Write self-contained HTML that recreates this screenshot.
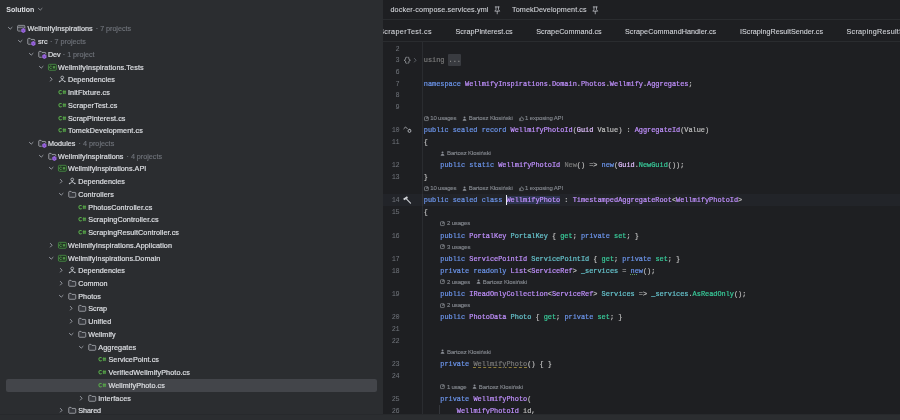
<!DOCTYPE html>
<html><head><meta charset="utf-8"><title>Rider</title>
<style>
*{margin:0;padding:0;box-sizing:border-box}
html,body{width:900px;height:420px;overflow:hidden;background:#2b2d30}
body{position:relative;font-family:"Liberation Sans",sans-serif;color:#dfe1e5}
.abs{position:absolute}
#bgL{position:absolute;left:0;top:0;width:383px;height:414px;background:#2b2d30}
#bgE{position:absolute;left:383px;top:0;width:517px;height:414px;background:#1e1f22}
#bot{position:absolute;left:0;top:414px;width:900px;height:6px;background:#2b2d30;border-top:1px solid #27292c}
#wrap{position:absolute;left:0;top:0;width:900.00px;height:414.00px;overflow:hidden;transform:scale(1.0);transform-origin:0 0;will-change:transform}
.t{position:absolute;white-space:pre;font-family:"Liberation Sans",sans-serif;font-size:7.2px;line-height:12px;height:12px;color:#dfe1e5;-webkit-text-stroke:.16px #dfe1e5}
.g{color:#6f737a;-webkit-text-stroke:.15px #6f737a}
.i{position:absolute;width:8.48px;height:8.48px;line-height:0}
.i svg{display:block}
.c{position:absolute;white-space:pre;font-family:"Liberation Mono",monospace;font-size:6.9px;line-height:12px;height:12px;color:#bdbdbd;-webkit-text-stroke:.2px currentColor}
.ln{position:absolute;white-space:pre;font-family:"Liberation Mono",monospace;font-size:6.9px;letter-spacing:-.35px;line-height:12px;height:12px;color:#70747b;text-align:right;width:21.20px}
.h{position:absolute;white-space:pre;font-family:"Liberation Sans",sans-serif;font-size:6.0px;line-height:12px;height:12px;color:#868a91;-webkit-text-stroke:.12px #868a91}
.k{color:#6c95eb}.p{color:#c191ff}.s{color:#e1bfff}.m{color:#39cc9b}.f{color:#66c3cc}.u{color:#787878}.v{color:#bdbdbd}
.tab{position:absolute;white-space:pre;font-family:"Liberation Sans",sans-serif;font-size:7.2px;line-height:12px;height:12px;color:#d2d4d9;-webkit-text-stroke:.1px #d2d4d9}
.hl{background:#2e3550}
.wavy{text-decoration:underline dashed #8f7e3c;text-decoration-thickness:.800px;text-underline-offset:1.100px}
.dot{text-decoration:underline dotted #5f9a62;text-decoration-thickness:0.80px;text-underline-offset:1.00px}
</style></head><body>
<div id="bgL"></div><div id="bgE"></div><div id="bot"></div>
<div id="wrap">
<div class="t" style="left:6.30px;top:4px;font-weight:bold;font-size:7.00px;-webkit-text-stroke:0">Solution</div>
<div class="i" style="left:35.76px;top:5.36px"><svg width="8.48" height="8.48" viewBox="0 0 16 16" overflow="visible"><path d="M4.600 6.400l3.400 3.200 3.400-3.200" stroke="#8f939a" stroke-width="1.700" fill="none" stroke-linecap="round" stroke-linejoin="round"/></svg></div>
<div class="abs" style="left:6.20px;top:379.04px;width:370.40px;height:12.60px;background:#43454a;border-radius:2.10px"></div>
<div class="i" style="left:6.36px;top:24.26px"><svg width="8.48" height="8.48" viewBox="0 0 16 16" overflow="visible"><path d="M4.600 6.400l3.400 3.200 3.400-3.200" stroke="#a0a4ab" stroke-width="1.700" fill="none" stroke-linecap="round" stroke-linejoin="round"/></svg></div>
<div class="i" style="left:17.40px;top:24.26px"><svg width="8.48" height="8.48" viewBox="0 0 16 16" overflow="visible"><rect x="1.100" y="2.600" width="13.800" height="10.800" rx="1.800" fill="#393b40" stroke="#c4c7cd" stroke-width="1.150"/><path d="M1.300 6.100h13.400" stroke="#c4c7cd" stroke-width="1.100"/><path d="M12 6.500l5 2.900v5.600l-5 2.800-5-2.800V9.400z" fill="#2b2d30"/><path d="M12 7.600l4 2.300v4.600l-4 2.300-4-2.300V9.900z" fill="#9e6be2"/><path d="M12 12.300v3.600M8.800 10.500l3.200 1.800 3.200-1.800" stroke="#6a3fae" stroke-width="1" fill="none"/></svg></div>
<div class="t" style="left:27.50px;top:23px;letter-spacing:0.076px">WellmifyInspirations</div>
<div class="t g" style="left:95.80px;top:23px;letter-spacing:-0.030px">· 7 projects</div>
<div class="i" style="left:16.43px;top:37.26px"><svg width="8.48" height="8.48" viewBox="0 0 16 16" overflow="visible"><path d="M4.600 6.400l3.400 3.200 3.400-3.200" stroke="#a0a4ab" stroke-width="1.700" fill="none" stroke-linecap="round" stroke-linejoin="round"/></svg></div>
<div class="i" style="left:27.47px;top:37.26px"><svg width="8.48" height="8.48" viewBox="0 0 16 16" overflow="visible"><path d="M1.400 4c0-.8.600-1.400 1.400-1.400h3l1.900 2h5.500c.8 0 1.400.6 1.400 1.400v6.300c0 .8-.6 1.400-1.400 1.400H2.800c-.8 0-1.400-.6-1.400-1.400z" fill="#35373c" stroke="#bfc2c8" stroke-width="1.300"/><path d="M12 6.500l5 2.900v5.600l-5 2.800-5-2.800V9.400z" fill="#2b2d30"/><path d="M12 7.600l4 2.300v4.600l-4 2.300-4-2.300V9.900z" fill="#9e6be2"/><path d="M12 12.300v3.600M8.800 10.500l3.200 1.800 3.200-1.800" stroke="#6a3fae" stroke-width="1" fill="none"/></svg></div>
<div class="t" style="left:38.00px;top:36px;letter-spacing:-0.031px">src</div>
<div class="t g" style="left:50.00px;top:36px;letter-spacing:0.020px">· 7 projects</div>
<div class="i" style="left:26.50px;top:50.26px"><svg width="8.48" height="8.48" viewBox="0 0 16 16" overflow="visible"><path d="M4.600 6.400l3.400 3.200 3.400-3.200" stroke="#a0a4ab" stroke-width="1.700" fill="none" stroke-linecap="round" stroke-linejoin="round"/></svg></div>
<div class="i" style="left:37.54px;top:50.26px"><svg width="8.48" height="8.48" viewBox="0 0 16 16" overflow="visible"><path d="M1.400 4c0-.8.600-1.400 1.400-1.400h3l1.900 2h5.500c.8 0 1.400.6 1.400 1.400v6.300c0 .8-.6 1.400-1.400 1.400H2.800c-.8 0-1.400-.6-1.400-1.400z" fill="#35373c" stroke="#bfc2c8" stroke-width="1.300"/><path d="M12 6.500l5 2.900v5.600l-5 2.800-5-2.800V9.400z" fill="#2b2d30"/><path d="M12 7.600l4 2.300v4.600l-4 2.300-4-2.300V9.900z" fill="#9e6be2"/><path d="M12 12.300v3.600M8.800 10.500l3.200 1.800 3.200-1.800" stroke="#6a3fae" stroke-width="1" fill="none"/></svg></div>
<div class="t" style="left:48.00px;top:49px;letter-spacing:-0.099px">Dev</div>
<div class="t g" style="left:62.80px;top:49px;letter-spacing:-0.024px">· 1 project</div>
<div class="i" style="left:36.57px;top:63.26px"><svg width="8.48" height="8.48" viewBox="0 0 16 16" overflow="visible"><path d="M4.600 6.400l3.400 3.200 3.400-3.200" stroke="#a0a4ab" stroke-width="1.700" fill="none" stroke-linecap="round" stroke-linejoin="round"/></svg></div>
<div class="i" style="left:47.61px;top:63.26px"><svg width="8.48" height="8.48" viewBox="0 0 16 16" overflow="visible"><rect x=".800" y="2.500" width="15" height="11.200" rx="2" fill="#213324" stroke="#4f9e49" stroke-width="1.400"/><path d="M6.900 6.300a2.400 2.400 0 1 0 0 3.600" stroke="#66bb58" stroke-width="1.250" fill="none"/><path d="M10.200 5.800v4.600M12.400 5.800v4.600M9 7.200h4.600M9 9h4.600" stroke="#66bb58" stroke-width=".95"/></svg></div>
<div class="t" style="left:58.00px;top:62px;letter-spacing:0.123px">WellmifyInspirations.Tests</div>
<div class="i" style="left:46.64px;top:75.26px"><svg width="8.48" height="8.48" viewBox="0 0 16 16" overflow="visible"><path d="M6.400 4.600l3.200 3.400-3.200 3.400" stroke="#a0a4ab" stroke-width="1.700" fill="none" stroke-linecap="round" stroke-linejoin="round"/></svg></div>
<div class="i" style="left:57.68px;top:75.26px"><svg width="8.48" height="8.48" viewBox="0 0 16 16" overflow="visible"><circle cx="8" cy="4.700" r="2.600" fill="none" stroke="#c8cbd0" stroke-width="1.500"/><path d="M8 7.300v1.700M8 9l-4.600 3.200M8 9l4.600 3.200" stroke="#c8cbd0" stroke-width="1.500" fill="none" stroke-linecap="round"/><circle cx="3" cy="12.400" r="1.500" fill="#c8cbd0"/><circle cx="13" cy="12.400" r="1.500" fill="#c8cbd0"/></svg></div>
<div class="t" style="left:68.00px;top:74px;letter-spacing:0.086px">Dependencies</div>
<div class="i" style="left:57.68px;top:88.26px"><svg width="8.48" height="8.48" viewBox="0 0 16 16" overflow="visible"><path d="M6.900 5.700a3 3.300 0 1 0 0 4.400" stroke="#58a94a" stroke-width="2" fill="none"/><path d="M10.700 4.300v7.200M13.400 4.300v7.200M8.800 6.600h6.500M8.800 9.300h6.500" stroke="#58a94a" stroke-width="1.500"/></svg></div>
<div class="t" style="left:68.00px;top:87px;letter-spacing:0.089px">InitFixture.cs</div>
<div class="i" style="left:57.68px;top:101.26px"><svg width="8.48" height="8.48" viewBox="0 0 16 16" overflow="visible"><path d="M6.900 5.700a3 3.300 0 1 0 0 4.400" stroke="#58a94a" stroke-width="2" fill="none"/><path d="M10.700 4.300v7.200M13.400 4.300v7.200M8.800 6.600h6.500M8.800 9.300h6.500" stroke="#58a94a" stroke-width="1.500"/></svg></div>
<div class="t" style="left:68.00px;top:100px;letter-spacing:0.140px">ScraperTest.cs</div>
<div class="i" style="left:57.68px;top:114.26px"><svg width="8.48" height="8.48" viewBox="0 0 16 16" overflow="visible"><path d="M6.900 5.700a3 3.300 0 1 0 0 4.400" stroke="#58a94a" stroke-width="2" fill="none"/><path d="M10.700 4.300v7.200M13.400 4.300v7.200M8.800 6.600h6.500M8.800 9.300h6.500" stroke="#58a94a" stroke-width="1.500"/></svg></div>
<div class="t" style="left:68.00px;top:113px;letter-spacing:0.069px">ScrapPinterest.cs</div>
<div class="i" style="left:57.68px;top:126.26px"><svg width="8.48" height="8.48" viewBox="0 0 16 16" overflow="visible"><path d="M6.900 5.700a3 3.300 0 1 0 0 4.400" stroke="#58a94a" stroke-width="2" fill="none"/><path d="M10.700 4.300v7.200M13.400 4.300v7.200M8.800 6.600h6.500M8.800 9.300h6.500" stroke="#58a94a" stroke-width="1.500"/></svg></div>
<div class="t" style="left:68.00px;top:125px;letter-spacing:0.121px">TomekDevelopment.cs</div>
<div class="i" style="left:26.50px;top:139.26px"><svg width="8.48" height="8.48" viewBox="0 0 16 16" overflow="visible"><path d="M4.600 6.400l3.400 3.200 3.400-3.200" stroke="#a0a4ab" stroke-width="1.700" fill="none" stroke-linecap="round" stroke-linejoin="round"/></svg></div>
<div class="i" style="left:37.54px;top:139.26px"><svg width="8.48" height="8.48" viewBox="0 0 16 16" overflow="visible"><path d="M1.400 4c0-.8.600-1.400 1.400-1.400h3l1.900 2h5.500c.8 0 1.400.6 1.400 1.400v6.300c0 .8-.6 1.400-1.400 1.400H2.800c-.8 0-1.400-.6-1.400-1.400z" fill="#35373c" stroke="#bfc2c8" stroke-width="1.300"/><path d="M12 6.500l5 2.900v5.600l-5 2.800-5-2.800V9.400z" fill="#2b2d30"/><path d="M12 7.600l4 2.300v4.600l-4 2.300-4-2.300V9.900z" fill="#9e6be2"/><path d="M12 12.300v3.600M8.800 10.500l3.200 1.800 3.200-1.800" stroke="#6a3fae" stroke-width="1" fill="none"/></svg></div>
<div class="t" style="left:48.00px;top:138px;letter-spacing:0.047px">Modules</div>
<div class="t g" style="left:78.50px;top:138px;letter-spacing:0.016px">· 4 projects</div>
<div class="i" style="left:36.57px;top:152.26px"><svg width="8.48" height="8.48" viewBox="0 0 16 16" overflow="visible"><path d="M4.600 6.400l3.400 3.200 3.400-3.200" stroke="#a0a4ab" stroke-width="1.700" fill="none" stroke-linecap="round" stroke-linejoin="round"/></svg></div>
<div class="i" style="left:47.61px;top:152.26px"><svg width="8.48" height="8.48" viewBox="0 0 16 16" overflow="visible"><path d="M1.400 4c0-.8.600-1.400 1.400-1.400h3l1.900 2h5.500c.8 0 1.400.6 1.400 1.400v6.300c0 .8-.6 1.400-1.400 1.400H2.800c-.8 0-1.400-.6-1.400-1.400z" fill="#35373c" stroke="#bfc2c8" stroke-width="1.300"/><path d="M12 6.500l5 2.900v5.600l-5 2.800-5-2.800V9.400z" fill="#2b2d30"/><path d="M12 7.600l4 2.300v4.600l-4 2.300-4-2.300V9.900z" fill="#9e6be2"/><path d="M12 12.300v3.600M8.800 10.500l3.200 1.800 3.200-1.800" stroke="#6a3fae" stroke-width="1" fill="none"/></svg></div>
<div class="t" style="left:58.00px;top:151px;letter-spacing:0.086px">WellmifyInspirations</div>
<div class="t g" style="left:126.50px;top:151px;letter-spacing:-0.005px">· 4 projects</div>
<div class="i" style="left:46.64px;top:164.26px"><svg width="8.48" height="8.48" viewBox="0 0 16 16" overflow="visible"><path d="M4.600 6.400l3.400 3.200 3.400-3.200" stroke="#a0a4ab" stroke-width="1.700" fill="none" stroke-linecap="round" stroke-linejoin="round"/></svg></div>
<div class="i" style="left:57.68px;top:164.26px"><svg width="8.48" height="8.48" viewBox="0 0 16 16" overflow="visible"><rect x=".800" y="2.500" width="15" height="11.200" rx="2" fill="#213324" stroke="#4f9e49" stroke-width="1.400"/><path d="M6.900 6.300a2.400 2.400 0 1 0 0 3.600" stroke="#66bb58" stroke-width="1.250" fill="none"/><path d="M10.200 5.800v4.600M12.400 5.800v4.600M9 7.200h4.600M9 9h4.600" stroke="#66bb58" stroke-width=".95"/></svg></div>
<div class="t" style="left:68.00px;top:163px;letter-spacing:0.037px">WellmifyInspirations.API</div>
<div class="i" style="left:56.71px;top:177.26px"><svg width="8.48" height="8.48" viewBox="0 0 16 16" overflow="visible"><path d="M6.400 4.600l3.200 3.400-3.200 3.400" stroke="#a0a4ab" stroke-width="1.700" fill="none" stroke-linecap="round" stroke-linejoin="round"/></svg></div>
<div class="i" style="left:67.75px;top:177.26px"><svg width="8.48" height="8.48" viewBox="0 0 16 16" overflow="visible"><circle cx="8" cy="4.700" r="2.600" fill="none" stroke="#c8cbd0" stroke-width="1.500"/><path d="M8 7.300v1.700M8 9l-4.600 3.200M8 9l4.600 3.200" stroke="#c8cbd0" stroke-width="1.500" fill="none" stroke-linecap="round"/><circle cx="3" cy="12.400" r="1.500" fill="#c8cbd0"/><circle cx="13" cy="12.400" r="1.500" fill="#c8cbd0"/></svg></div>
<div class="t" style="left:78.25px;top:176px;letter-spacing:0.065px">Dependencies</div>
<div class="i" style="left:56.71px;top:190.26px"><svg width="8.48" height="8.48" viewBox="0 0 16 16" overflow="visible"><path d="M4.600 6.400l3.400 3.200 3.400-3.200" stroke="#a0a4ab" stroke-width="1.700" fill="none" stroke-linecap="round" stroke-linejoin="round"/></svg></div>
<div class="i" style="left:67.75px;top:190.26px"><svg width="8.48" height="8.48" viewBox="0 0 16 16" overflow="visible"><path d="M1.400 4c0-.8.600-1.400 1.400-1.400h3l1.900 2h5.500c.8 0 1.400.6 1.400 1.400v6.300c0 .8-.6 1.400-1.400 1.400H2.800c-.8 0-1.400-.6-1.400-1.400z" fill="#35373c" stroke="#bfc2c8" stroke-width="1.300"/></svg></div>
<div class="t" style="left:78.25px;top:189px;letter-spacing:0.089px">Controllers</div>
<div class="i" style="left:77.82px;top:203.26px"><svg width="8.48" height="8.48" viewBox="0 0 16 16" overflow="visible"><path d="M6.900 5.700a3 3.300 0 1 0 0 4.400" stroke="#58a94a" stroke-width="2" fill="none"/><path d="M10.700 4.300v7.200M13.400 4.300v7.200M8.800 6.600h6.500M8.800 9.300h6.500" stroke="#58a94a" stroke-width="1.500"/></svg></div>
<div class="t" style="left:88.25px;top:202px;letter-spacing:0.101px">PhotosController.cs</div>
<div class="i" style="left:77.82px;top:215.26px"><svg width="8.48" height="8.48" viewBox="0 0 16 16" overflow="visible"><path d="M6.900 5.700a3 3.300 0 1 0 0 4.400" stroke="#58a94a" stroke-width="2" fill="none"/><path d="M10.700 4.300v7.200M13.400 4.300v7.200M8.800 6.600h6.500M8.800 9.300h6.500" stroke="#58a94a" stroke-width="1.500"/></svg></div>
<div class="t" style="left:88.25px;top:214px;letter-spacing:0.104px">ScrapingController.cs</div>
<div class="i" style="left:77.82px;top:228.26px"><svg width="8.48" height="8.48" viewBox="0 0 16 16" overflow="visible"><path d="M6.900 5.700a3 3.300 0 1 0 0 4.400" stroke="#58a94a" stroke-width="2" fill="none"/><path d="M10.700 4.300v7.200M13.400 4.300v7.200M8.800 6.600h6.500M8.800 9.300h6.500" stroke="#58a94a" stroke-width="1.500"/></svg></div>
<div class="t" style="left:88.25px;top:227px;letter-spacing:0.076px">ScrapingResultController.cs</div>
<div class="i" style="left:46.64px;top:241.26px"><svg width="8.48" height="8.48" viewBox="0 0 16 16" overflow="visible"><path d="M6.400 4.600l3.200 3.400-3.200 3.400" stroke="#a0a4ab" stroke-width="1.700" fill="none" stroke-linecap="round" stroke-linejoin="round"/></svg></div>
<div class="i" style="left:57.68px;top:241.26px"><svg width="8.48" height="8.48" viewBox="0 0 16 16" overflow="visible"><rect x=".800" y="2.500" width="15" height="11.200" rx="2" fill="#213324" stroke="#4f9e49" stroke-width="1.400"/><path d="M6.900 6.300a2.400 2.400 0 1 0 0 3.600" stroke="#66bb58" stroke-width="1.250" fill="none"/><path d="M10.200 5.800v4.600M12.400 5.800v4.600M9 7.200h4.600M9 9h4.600" stroke="#66bb58" stroke-width=".95"/></svg></div>
<div class="t" style="left:68.00px;top:240px;letter-spacing:0.096px">WellmifyInspirations.Application</div>
<div class="i" style="left:46.64px;top:254.26px"><svg width="8.48" height="8.48" viewBox="0 0 16 16" overflow="visible"><path d="M4.600 6.400l3.400 3.200 3.400-3.200" stroke="#a0a4ab" stroke-width="1.700" fill="none" stroke-linecap="round" stroke-linejoin="round"/></svg></div>
<div class="i" style="left:57.68px;top:254.26px"><svg width="8.48" height="8.48" viewBox="0 0 16 16" overflow="visible"><rect x=".800" y="2.500" width="15" height="11.200" rx="2" fill="#213324" stroke="#4f9e49" stroke-width="1.400"/><path d="M6.900 6.300a2.400 2.400 0 1 0 0 3.600" stroke="#66bb58" stroke-width="1.250" fill="none"/><path d="M10.200 5.800v4.600M12.400 5.800v4.600M9 7.200h4.600M9 9h4.600" stroke="#66bb58" stroke-width=".95"/></svg></div>
<div class="t" style="left:68.00px;top:253px;letter-spacing:0.063px">WellmifyInspirations.Domain</div>
<div class="i" style="left:56.71px;top:266.26px"><svg width="8.48" height="8.48" viewBox="0 0 16 16" overflow="visible"><path d="M6.400 4.600l3.200 3.400-3.200 3.400" stroke="#a0a4ab" stroke-width="1.700" fill="none" stroke-linecap="round" stroke-linejoin="round"/></svg></div>
<div class="i" style="left:67.75px;top:266.26px"><svg width="8.48" height="8.48" viewBox="0 0 16 16" overflow="visible"><circle cx="8" cy="4.700" r="2.600" fill="none" stroke="#c8cbd0" stroke-width="1.500"/><path d="M8 7.300v1.700M8 9l-4.600 3.200M8 9l4.600 3.200" stroke="#c8cbd0" stroke-width="1.500" fill="none" stroke-linecap="round"/><circle cx="3" cy="12.400" r="1.500" fill="#c8cbd0"/><circle cx="13" cy="12.400" r="1.500" fill="#c8cbd0"/></svg></div>
<div class="t" style="left:78.25px;top:265px;letter-spacing:0.065px">Dependencies</div>
<div class="i" style="left:56.71px;top:279.26px"><svg width="8.48" height="8.48" viewBox="0 0 16 16" overflow="visible"><path d="M6.400 4.600l3.200 3.400-3.200 3.400" stroke="#a0a4ab" stroke-width="1.700" fill="none" stroke-linecap="round" stroke-linejoin="round"/></svg></div>
<div class="i" style="left:67.75px;top:279.26px"><svg width="8.48" height="8.48" viewBox="0 0 16 16" overflow="visible"><path d="M1.400 4c0-.8.600-1.400 1.400-1.400h3l1.900 2h5.500c.8 0 1.400.6 1.400 1.400v6.300c0 .8-.6 1.400-1.400 1.400H2.800c-.8 0-1.400-.6-1.400-1.400z" fill="#35373c" stroke="#bfc2c8" stroke-width="1.300"/></svg></div>
<div class="t" style="left:78.25px;top:278px;letter-spacing:0.013px">Common</div>
<div class="i" style="left:56.71px;top:292.26px"><svg width="8.48" height="8.48" viewBox="0 0 16 16" overflow="visible"><path d="M4.600 6.400l3.400 3.200 3.400-3.200" stroke="#a0a4ab" stroke-width="1.700" fill="none" stroke-linecap="round" stroke-linejoin="round"/></svg></div>
<div class="i" style="left:67.75px;top:292.26px"><svg width="8.48" height="8.48" viewBox="0 0 16 16" overflow="visible"><path d="M1.400 4c0-.8.600-1.400 1.400-1.400h3l1.900 2h5.500c.8 0 1.400.6 1.400 1.400v6.300c0 .8-.6 1.400-1.400 1.400H2.800c-.8 0-1.400-.6-1.400-1.400z" fill="#35373c" stroke="#bfc2c8" stroke-width="1.300"/></svg></div>
<div class="t" style="left:78.25px;top:291px;letter-spacing:0.060px">Photos</div>
<div class="i" style="left:66.78px;top:304.26px"><svg width="8.48" height="8.48" viewBox="0 0 16 16" overflow="visible"><path d="M6.400 4.600l3.200 3.400-3.200 3.400" stroke="#a0a4ab" stroke-width="1.700" fill="none" stroke-linecap="round" stroke-linejoin="round"/></svg></div>
<div class="i" style="left:77.82px;top:304.26px"><svg width="8.48" height="8.48" viewBox="0 0 16 16" overflow="visible"><path d="M1.400 4c0-.8.600-1.400 1.400-1.400h3l1.900 2h5.500c.8 0 1.400.6 1.400 1.400v6.300c0 .8-.6 1.400-1.400 1.400H2.800c-.8 0-1.400-.6-1.400-1.400z" fill="#35373c" stroke="#bfc2c8" stroke-width="1.300"/></svg></div>
<div class="t" style="left:88.25px;top:303px;letter-spacing:-0.006px">Scrap</div>
<div class="i" style="left:66.78px;top:317.26px"><svg width="8.48" height="8.48" viewBox="0 0 16 16" overflow="visible"><path d="M6.400 4.600l3.200 3.400-3.200 3.400" stroke="#a0a4ab" stroke-width="1.700" fill="none" stroke-linecap="round" stroke-linejoin="round"/></svg></div>
<div class="i" style="left:77.82px;top:317.26px"><svg width="8.48" height="8.48" viewBox="0 0 16 16" overflow="visible"><path d="M1.400 4c0-.8.600-1.400 1.400-1.400h3l1.900 2h5.500c.8 0 1.400.6 1.400 1.400v6.300c0 .8-.6 1.400-1.400 1.400H2.800c-.8 0-1.400-.6-1.400-1.400z" fill="#35373c" stroke="#bfc2c8" stroke-width="1.300"/></svg></div>
<div class="t" style="left:88.25px;top:316px;letter-spacing:0.089px">Unified</div>
<div class="i" style="left:66.78px;top:330.26px"><svg width="8.48" height="8.48" viewBox="0 0 16 16" overflow="visible"><path d="M4.600 6.400l3.400 3.200 3.400-3.200" stroke="#a0a4ab" stroke-width="1.700" fill="none" stroke-linecap="round" stroke-linejoin="round"/></svg></div>
<div class="i" style="left:77.82px;top:330.26px"><svg width="8.48" height="8.48" viewBox="0 0 16 16" overflow="visible"><path d="M1.400 4c0-.8.600-1.400 1.400-1.400h3l1.900 2h5.500c.8 0 1.400.6 1.400 1.400v6.300c0 .8-.6 1.400-1.400 1.400H2.800c-.8 0-1.400-.6-1.400-1.400z" fill="#35373c" stroke="#bfc2c8" stroke-width="1.300"/></svg></div>
<div class="t" style="left:88.25px;top:329px;letter-spacing:0.059px">Wellmify</div>
<div class="i" style="left:76.85px;top:343.26px"><svg width="8.48" height="8.48" viewBox="0 0 16 16" overflow="visible"><path d="M4.600 6.400l3.400 3.200 3.400-3.200" stroke="#a0a4ab" stroke-width="1.700" fill="none" stroke-linecap="round" stroke-linejoin="round"/></svg></div>
<div class="i" style="left:87.89px;top:343.26px"><svg width="8.48" height="8.48" viewBox="0 0 16 16" overflow="visible"><path d="M1.400 4c0-.8.600-1.400 1.400-1.400h3l1.900 2h5.500c.8 0 1.400.6 1.400 1.400v6.300c0 .8-.6 1.400-1.400 1.400H2.800c-.8 0-1.400-.6-1.400-1.400z" fill="#35373c" stroke="#bfc2c8" stroke-width="1.300"/></svg></div>
<div class="t" style="left:98.25px;top:342px;letter-spacing:0.123px">Aggregates</div>
<div class="i" style="left:97.96px;top:355.26px"><svg width="8.48" height="8.48" viewBox="0 0 16 16" overflow="visible"><path d="M6.900 5.700a3 3.300 0 1 0 0 4.400" stroke="#58a94a" stroke-width="2" fill="none"/><path d="M10.700 4.300v7.200M13.400 4.300v7.200M8.800 6.600h6.500M8.800 9.300h6.500" stroke="#58a94a" stroke-width="1.500"/></svg></div>
<div class="t" style="left:108.50px;top:354px;letter-spacing:0.064px">ServicePoint.cs</div>
<div class="i" style="left:97.96px;top:368.26px"><svg width="8.48" height="8.48" viewBox="0 0 16 16" overflow="visible"><path d="M6.900 5.700a3 3.300 0 1 0 0 4.400" stroke="#58a94a" stroke-width="2" fill="none"/><path d="M10.700 4.300v7.200M13.400 4.300v7.200M8.800 6.600h6.500M8.800 9.300h6.500" stroke="#58a94a" stroke-width="1.500"/></svg></div>
<div class="t" style="left:108.50px;top:367px;letter-spacing:0.105px">VerifiedWellmifyPhoto.cs</div>
<div class="i" style="left:97.96px;top:381.26px"><svg width="8.48" height="8.48" viewBox="0 0 16 16" overflow="visible"><path d="M6.900 5.700a3 3.300 0 1 0 0 4.400" stroke="#58a94a" stroke-width="2" fill="none"/><path d="M10.700 4.300v7.200M13.400 4.300v7.200M8.800 6.600h6.500M8.800 9.300h6.500" stroke="#58a94a" stroke-width="1.500"/></svg></div>
<div class="t" style="left:108.50px;top:380px;letter-spacing:0.094px">WellmifyPhoto.cs</div>
<div class="i" style="left:76.85px;top:394.26px"><svg width="8.48" height="8.48" viewBox="0 0 16 16" overflow="visible"><path d="M6.400 4.600l3.200 3.400-3.200 3.400" stroke="#a0a4ab" stroke-width="1.700" fill="none" stroke-linecap="round" stroke-linejoin="round"/></svg></div>
<div class="i" style="left:87.89px;top:394.26px"><svg width="8.48" height="8.48" viewBox="0 0 16 16" overflow="visible"><path d="M1.400 4c0-.8.600-1.400 1.400-1.400h3l1.900 2h5.500c.8 0 1.400.6 1.400 1.400v6.300c0 .8-.6 1.400-1.400 1.400H2.800c-.8 0-1.400-.6-1.400-1.400z" fill="#35373c" stroke="#bfc2c8" stroke-width="1.300"/></svg></div>
<div class="t" style="left:98.25px;top:393px;letter-spacing:0.119px">Interfaces</div>
<div class="i" style="left:56.71px;top:406.26px"><svg width="8.48" height="8.48" viewBox="0 0 16 16" overflow="visible"><path d="M6.400 4.600l3.200 3.400-3.200 3.400" stroke="#a0a4ab" stroke-width="1.700" fill="none" stroke-linecap="round" stroke-linejoin="round"/></svg></div>
<div class="i" style="left:67.75px;top:406.26px"><svg width="8.48" height="8.48" viewBox="0 0 16 16" overflow="visible"><path d="M1.400 4c0-.8.600-1.400 1.400-1.400h3l1.900 2h5.500c.8 0 1.400.6 1.400 1.400v6.300c0 .8-.6 1.400-1.400 1.400H2.800c-.8 0-1.400-.6-1.400-1.400z" fill="#35373c" stroke="#bfc2c8" stroke-width="1.300"/></svg></div>
<div class="t" style="left:78.25px;top:405px;letter-spacing:-0.073px">Shared</div>
<div class="abs" style="left:383.00px;top:19.20px;width:517.00px;height:1.00px;background:#2a2c2f"></div>
<div class="abs" style="left:383.00px;top:41.20px;width:517.00px;height:1.00px;background:#2a2c2f"></div>
<div class="abs" style="left:422.00px;top:42.00px;width:1.00px;height:372.00px;background:#2a2c30"></div>
<div class="abs" style="left:383.00px;top:0;width:517.00px;height:41.00px;overflow:hidden">
<div class="tab" style="left:7.50px;top:4px;letter-spacing:0.123px">docker-compose.services.yml</div>
<div class="tab" style="left:129.00px;top:4px;letter-spacing:0.108px">TomekDevelopment.cs</div>
<div class="tab" style="left:-3.80px;top:26px;letter-spacing:0.375px">ScraperTest.cs</div>
<div class="tab" style="left:72.50px;top:26px;letter-spacing:0.054px">ScrapPinterest.cs</div>
<div class="tab" style="left:153.25px;top:26px;letter-spacing:0.023px">ScrapeCommand.cs</div>
<div class="tab" style="left:242.00px;top:26px;letter-spacing:0.059px">ScrapeCommandHandler.cs</div>
<div class="tab" style="left:357.00px;top:26px;letter-spacing:0.012px">IScrapingResultSender.cs</div>
<div class="tab" style="left:463.50px;top:26px;letter-spacing:0.272px">ScrapingResultSenderTests.cs</div>
<div class="i" style="left:109.50px;top:5.50px"><svg width="8.48" height="8.48" viewBox="0 0 16 16" overflow="visible"><path d="M4.300 1.800h7.400M5.600 1.800v5l-2.200 3h9.200l-2.200-3v-5M8 9.800v5" stroke="#b9bcc2" stroke-width="1.500" fill="none" stroke-linejoin="round" stroke-linecap="round"/></svg></div>
<div class="i" style="left:208.00px;top:5.50px"><svg width="8.48" height="8.48" viewBox="0 0 16 16" overflow="visible"><path d="M4.300 1.800h7.400M5.600 1.800v5l-2.200 3h9.200l-2.200-3v-5M8 9.800v5" stroke="#b9bcc2" stroke-width="1.500" fill="none" stroke-linejoin="round" stroke-linecap="round"/></svg></div>
</div>
<div class="abs" style="left:383.00px;top:194.12px;width:517.00px;height:11.68px;background:#222429"></div>
<div class="abs" style="left:422.00px;top:194.12px;width:1.00px;height:11.68px;background:#303237"></div>
<div class="ln" style="left:378.20px;top:43px">2</div>
<div class="ln" style="left:378.20px;top:54px">3</div>
<div class="c" style="left:423.75px;top:54px"><span class="u">using</span></div>
<div class="abs" style="left:448.00px;top:53.80px;width:12.80px;height:12.00px;background:#393b40;border-radius:1.00px"></div>
<div class="c" style="left:448.59px;top:54px"><span style="color:#8c8c8c">...</span></div>
<div class="ln" style="left:378.20px;top:66px">6</div>
<div class="ln" style="left:378.20px;top:78px">7</div>
<div class="c" style="left:423.75px;top:78px"><span class="k">namespace</span> <span class="p">WellmifyInspirations</span>.<span class="p">Domain</span>.<span class="p">Photos</span>.<span class="p">Wellmify</span>.<span class="p">Aggregates</span>;</div>
<div class="ln" style="left:378.20px;top:89px">8</div>
<div class="ln" style="left:378.20px;top:101px">9</div>
<div class="i" style="left:424.05px;top:115.70px;width:5.10px;height:5.10px"><svg width="5.09" height="5.09" viewBox="0 0 16 16" overflow="visible"><rect x="1.600" y="2.400" width="12" height="12" rx="1.800" fill="none" stroke="#8a8e95" stroke-width="2.200"/><path d="M6 10l5.500-5.500M7.500 4h4.500v4.500" stroke="#8a8e95" stroke-width="2" fill="none"/></svg></div>
<div class="h" style="left:430.25px;top:112px;letter-spacing:-0.189px">10 usages</div>
<div class="i" style="left:462.20px;top:115.70px;width:5.10px;height:5.10px"><svg width="5.09" height="5.09" viewBox="0 0 16 16" overflow="visible"><circle cx="8" cy="4.600" r="3.100" fill="#8a8e95"/><path d="M2.200 15c0-3.800 2.400-5.600 5.800-5.600s5.800 1.800 5.800 5.600z" fill="#8a8e95"/></svg></div>
<div class="h" style="left:468.75px;top:112px;letter-spacing:-0.099px">Bartosz Kłosiński</div>
<div class="i" style="left:518.60px;top:115.70px;width:5.10px;height:5.10px"><svg width="5.09" height="5.09" viewBox="0 0 16 16" overflow="visible"><path d="M1.500 7.500h3.200v7H1.500zM4.700 7.800l3.300-5.600c1.700 0 2.300 1.200 1.900 2.600l-.5 2h4c1.100 0 1.800.9 1.500 1.900l-1.100 4.300c-.2.900-.9 1.500-1.800 1.500H4.700" fill="none" stroke="#8a8e95" stroke-width="2" stroke-linejoin="round"/></svg></div>
<div class="h" style="left:525.00px;top:112px;letter-spacing:-0.145px">1 exposing API</div>
<div class="ln" style="left:378.20px;top:124px">10</div>
<div class="c" style="left:423.75px;top:124px"><span class="k">public sealed record</span> <span class="p">WellmifyPhotoId</span>(<span class="s">Guid</span> <span class="v">Value</span>) : <span class="p">AggregateId</span>(<span class="v">Value</span>)</div>
<div class="ln" style="left:378.20px;top:136px">11</div>
<div class="c" style="left:423.75px;top:136px">{</div>
<div class="i" style="left:440.40px;top:150.74px;width:5.10px;height:5.10px"><svg width="5.09" height="5.09" viewBox="0 0 16 16" overflow="visible"><circle cx="8" cy="4.600" r="3.100" fill="#8a8e95"/><path d="M2.200 15c0-3.800 2.400-5.600 5.800-5.600s5.800 1.800 5.800 5.600z" fill="#8a8e95"/></svg></div>
<div class="h" style="left:447.00px;top:147px;letter-spacing:-0.114px">Bartosz Kłosiński</div>
<div class="ln" style="left:378.20px;top:159px">12</div>
<div class="c" style="left:423.75px;top:159px">    <span class="k">public static</span> <span class="p">WellmifyPhotoId</span> <span class="u">New</span>() =&gt; <span class="k">new</span>(<span class="s">Guid</span>.<span class="m">NewGuid</span>());</div>
<div class="ln" style="left:378.20px;top:171px">13</div>
<div class="c" style="left:423.75px;top:171px">}</div>
<div class="i" style="left:424.05px;top:185.78px;width:5.10px;height:5.10px"><svg width="5.09" height="5.09" viewBox="0 0 16 16" overflow="visible"><rect x="1.600" y="2.400" width="12" height="12" rx="1.800" fill="none" stroke="#8a8e95" stroke-width="2.200"/><path d="M6 10l5.500-5.500M7.500 4h4.500v4.500" stroke="#8a8e95" stroke-width="2" fill="none"/></svg></div>
<div class="h" style="left:430.25px;top:182px;letter-spacing:-0.189px">10 usages</div>
<div class="i" style="left:462.20px;top:185.78px;width:5.10px;height:5.10px"><svg width="5.09" height="5.09" viewBox="0 0 16 16" overflow="visible"><circle cx="8" cy="4.600" r="3.100" fill="#8a8e95"/><path d="M2.200 15c0-3.800 2.400-5.600 5.800-5.600s5.800 1.800 5.800 5.600z" fill="#8a8e95"/></svg></div>
<div class="h" style="left:468.75px;top:182px;letter-spacing:-0.099px">Bartosz Kłosiński</div>
<div class="i" style="left:518.60px;top:185.78px;width:5.10px;height:5.10px"><svg width="5.09" height="5.09" viewBox="0 0 16 16" overflow="visible"><path d="M1.500 7.500h3.200v7H1.500zM4.700 7.800l3.300-5.600c1.700 0 2.300 1.200 1.900 2.600l-.5 2h4c1.100 0 1.800.9 1.500 1.900l-1.100 4.300c-.2.900-.9 1.500-1.800 1.500H4.700" fill="none" stroke="#8a8e95" stroke-width="2" stroke-linejoin="round"/></svg></div>
<div class="h" style="left:525.00px;top:182px;letter-spacing:-0.145px">1 exposing API</div>
<div class="ln" style="left:378.20px;top:194px">14</div>
<div class="c" style="left:423.75px;top:194px"><span class="k">public sealed class</span> <span class="p hl">WellmifyPhoto</span> : <span class="p">TimestampedAggregateRoot</span>&lt;<span class="p">WellmifyPhotoId</span>&gt;</div>
<div class="ln" style="left:378.20px;top:206px">15</div>
<div class="c" style="left:423.75px;top:206px">{</div>
<div class="i" style="left:440.30px;top:220.82px;width:5.10px;height:5.10px"><svg width="5.09" height="5.09" viewBox="0 0 16 16" overflow="visible"><rect x="1.600" y="2.400" width="12" height="12" rx="1.800" fill="none" stroke="#8a8e95" stroke-width="2.200"/><path d="M6 10l5.500-5.500M7.500 4h4.500v4.500" stroke="#8a8e95" stroke-width="2" fill="none"/></svg></div>
<div class="h" style="left:447.00px;top:217px;letter-spacing:-0.170px">2 usages</div>
<div class="ln" style="left:378.20px;top:230px">16</div>
<div class="c" style="left:423.75px;top:230px">    <span class="k">public</span> <span class="p">PortalKey</span> <span class="f">PortalKey</span> { <span class="m">get</span>; <span class="k">private</span> <span class="m">set</span>; }</div>
<div class="i" style="left:440.30px;top:244.18px;width:5.10px;height:5.10px"><svg width="5.09" height="5.09" viewBox="0 0 16 16" overflow="visible"><rect x="1.600" y="2.400" width="12" height="12" rx="1.800" fill="none" stroke="#8a8e95" stroke-width="2.200"/><path d="M6 10l5.500-5.500M7.500 4h4.500v4.500" stroke="#8a8e95" stroke-width="2" fill="none"/></svg></div>
<div class="h" style="left:447.00px;top:241px;letter-spacing:-0.107px">3 usages</div>
<div class="ln" style="left:378.20px;top:253px">17</div>
<div class="c" style="left:423.75px;top:253px">    <span class="k">public</span> <span class="p">ServicePointId</span> <span class="f">ServicePointId</span> { <span class="m">get</span>; <span class="k">private</span> <span class="m">set</span>; }</div>
<div class="ln" style="left:378.20px;top:265px">18</div>
<div class="c" style="left:423.75px;top:265px">    <span class="k">private readonly</span> <span class="p">List</span>&lt;<span class="p">ServiceRef</span>&gt; <span class="f">_services</span> = <span class="k dot">ne</span><span class="k">w</span>();</div>
<div class="i" style="left:440.30px;top:279.22px;width:5.10px;height:5.10px"><svg width="5.09" height="5.09" viewBox="0 0 16 16" overflow="visible"><rect x="1.600" y="2.400" width="12" height="12" rx="1.800" fill="none" stroke="#8a8e95" stroke-width="2.200"/><path d="M6 10l5.500-5.500M7.500 4h4.500v4.500" stroke="#8a8e95" stroke-width="2" fill="none"/></svg></div>
<div class="h" style="left:447.00px;top:276px;letter-spacing:-0.170px">2 usages</div>
<div class="i" style="left:476.40px;top:279.22px;width:5.10px;height:5.10px"><svg width="5.09" height="5.09" viewBox="0 0 16 16" overflow="visible"><circle cx="8" cy="4.600" r="3.100" fill="#8a8e95"/><path d="M2.200 15c0-3.800 2.400-5.600 5.800-5.600s5.800 1.800 5.800 5.600z" fill="#8a8e95"/></svg></div>
<div class="h" style="left:482.75px;top:276px;letter-spacing:-0.085px">Bartosz Kłosiński</div>
<div class="ln" style="left:378.20px;top:288px">19</div>
<div class="c" style="left:423.75px;top:288px">    <span class="k">public</span> <span class="p">IReadOnlyCollection</span>&lt;<span class="p">ServiceRef</span>&gt; <span class="f">Services</span> =&gt; <span class="f">_services</span>.<span class="m">AsReadOnly</span>();</div>
<div class="i" style="left:440.30px;top:302.58px;width:5.10px;height:5.10px"><svg width="5.09" height="5.09" viewBox="0 0 16 16" overflow="visible"><rect x="1.600" y="2.400" width="12" height="12" rx="1.800" fill="none" stroke="#8a8e95" stroke-width="2.200"/><path d="M6 10l5.500-5.500M7.500 4h4.500v4.500" stroke="#8a8e95" stroke-width="2" fill="none"/></svg></div>
<div class="h" style="left:447.00px;top:299px;letter-spacing:-0.170px">2 usages</div>
<div class="ln" style="left:378.20px;top:311px">20</div>
<div class="c" style="left:423.75px;top:311px">    <span class="k">public</span> <span class="p">PhotoData</span> <span class="f">Photo</span> { <span class="m">get</span>; <span class="k">private</span> <span class="m">set</span>; }</div>
<div class="ln" style="left:378.20px;top:323px">21</div>
<div class="ln" style="left:378.20px;top:335px">22</div>
<div class="i" style="left:440.40px;top:349.30px;width:5.10px;height:5.10px"><svg width="5.09" height="5.09" viewBox="0 0 16 16" overflow="visible"><circle cx="8" cy="4.600" r="3.100" fill="#8a8e95"/><path d="M2.200 15c0-3.800 2.400-5.600 5.800-5.600s5.800 1.800 5.800 5.600z" fill="#8a8e95"/></svg></div>
<div class="h" style="left:447.00px;top:346px;letter-spacing:-0.114px">Bartosz Kłosiński</div>
<div class="ln" style="left:378.20px;top:358px">23</div>
<div class="c" style="left:423.75px;top:358px">    <span class="k">private</span> <span class="u wavy">WellmifyPhoto</span>() { }</div>
<div class="ln" style="left:378.20px;top:370px">24</div>
<div class="i" style="left:440.30px;top:384.34px;width:5.10px;height:5.10px"><svg width="5.09" height="5.09" viewBox="0 0 16 16" overflow="visible"><rect x="1.600" y="2.400" width="12" height="12" rx="1.800" fill="none" stroke="#8a8e95" stroke-width="2.200"/><path d="M6 10l5.500-5.500M7.500 4h4.500v4.500" stroke="#8a8e95" stroke-width="2" fill="none"/></svg></div>
<div class="h" style="left:447.00px;top:381px;letter-spacing:-0.301px">1 usage</div>
<div class="i" style="left:472.40px;top:384.34px;width:5.10px;height:5.10px"><svg width="5.09" height="5.09" viewBox="0 0 16 16" overflow="visible"><circle cx="8" cy="4.600" r="3.100" fill="#8a8e95"/><path d="M2.200 15c0-3.800 2.400-5.600 5.800-5.600s5.800 1.800 5.800 5.600z" fill="#8a8e95"/></svg></div>
<div class="h" style="left:478.75px;top:381px;letter-spacing:-0.085px">Bartosz Kłosiński</div>
<div class="ln" style="left:378.20px;top:393px">25</div>
<div class="c" style="left:423.75px;top:393px">    <span class="k">private</span> <span class="p">WellmifyPhoto</span>(</div>
<div class="ln" style="left:378.20px;top:405px">26</div>
<div class="c" style="left:423.75px;top:405px">        <span class="p">WellmifyPhotoId</span> <span class="v">id</span>,</div>
<div class="i" style="left:402.55px;top:55.56px"><svg width="8.48" height="8.48" viewBox="0 0 16 16" overflow="visible"><path d="M6.900 2.400H6.100Q4.900 2.400 4.900 3.500V6.300L2 8L4.900 9.700V12.500Q4.900 13.600 6.100 13.600H6.900M9.100 2.400H9.900Q11.100 2.400 11.100 3.500V6.300L14 8L11.100 9.700V12.500Q11.100 13.600 9.900 13.600H9.100" stroke="#b9bcc2" stroke-width="1.200" fill="none" stroke-linecap="round" stroke-linejoin="round"/></svg></div>
<div class="i" style="left:411.20px;top:55.56px"><svg width="8.48" height="8.48" viewBox="0 0 16 16" overflow="visible"><path d="M6.400 4.600l3.200 3.400-3.200 3.400" stroke="#62666d" stroke-width="1.700" fill="none" stroke-linecap="round" stroke-linejoin="round"/></svg></div>
<div class="i" style="left:402.80px;top:125.28px"><svg width="9.01" height="9.01" viewBox="0 0 16 16" overflow="visible"><path d="M1.500 6.500l3-3 3 3" stroke="#c9ccd2" stroke-width="1.300" fill="none" stroke-linecap="round" stroke-linejoin="round"/><circle cx="11.500" cy="10.500" r="2.600" fill="none" stroke="#c9ccd2" stroke-width="1.400"/><path d="M11.500 6.300l2 1.600-2 1.400" fill="#c9ccd2"/></svg></div>
<div class="i" style="left:403.00px;top:195.72px"><svg width="8.48" height="8.48" viewBox="0 0 16 16" overflow="visible"><path d="M.3 5l7.300-4.500 1.900 3.100L2.200 8.100z" fill="#d3d5d9"/><path d="M6.300 5.300l7.900 8.200" stroke="#c5c8cd" stroke-width="2.300" stroke-linecap="round"/></svg></div>
<div class="abs" style="left:506.00px;top:194.96px;width:1.00px;height:10.00px;background:#e8eaee"></div>
<div class="abs" style="left:439.30px;top:404.50px;width:1.00px;height:10.00px;background:#34363b"></div>
</div>
</body></html>
